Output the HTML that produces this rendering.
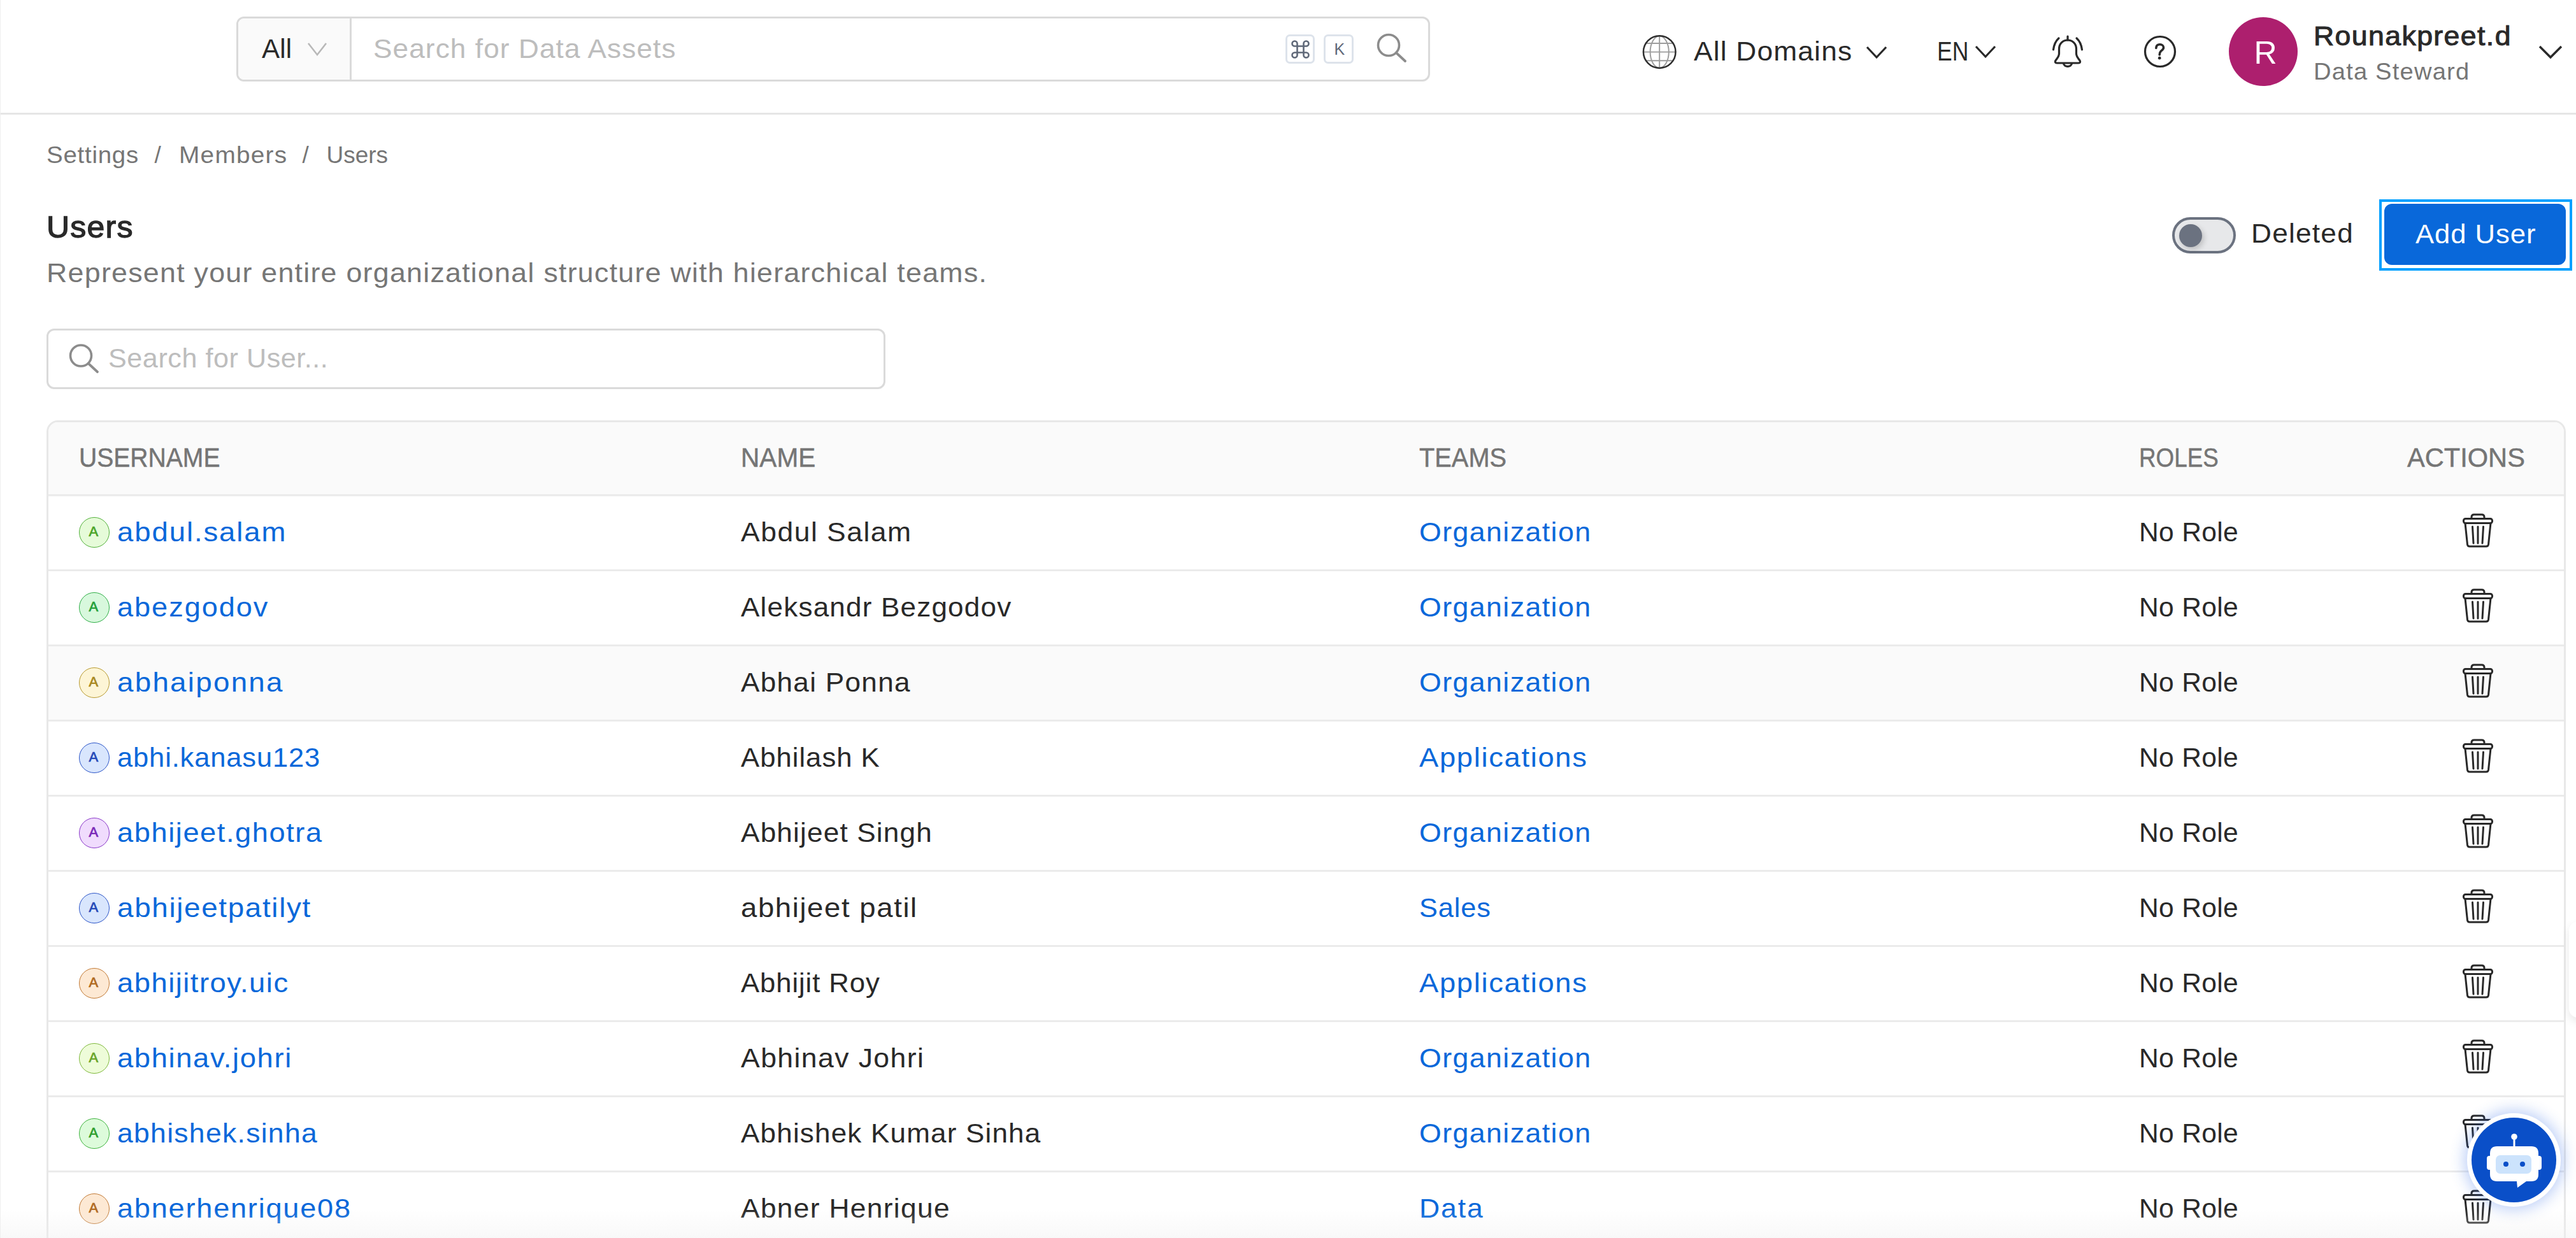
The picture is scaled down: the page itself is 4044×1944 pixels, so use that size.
<!DOCTYPE html>
<html><head><meta charset="utf-8"><style>
html,body{margin:0;padding:0;width:4044px;height:1944px;overflow:hidden;background:#fff;}
body{position:relative;font-family:"Liberation Sans",sans-serif;}
.t{position:absolute;white-space:nowrap;line-height:1;}
</style></head><body>
<div style="position:absolute;left:0;top:177px;width:4044px;height:3px;background:#e6e6e6"></div>
<div style="position:absolute;left:0;top:0;width:1px;height:1944px;background:#efefef"></div>
<div style="position:absolute;left:371px;top:26px;width:1874px;height:102px;box-sizing:border-box;border:3px solid #dadada;border-radius:12px;background:#fff;overflow:hidden"><div style="position:absolute;left:0;top:0;width:175px;height:100%;background:#fafafa;border-right:3px solid #dadada"></div></div>
<div class="t" style="left:410.5px;top:55.9px;font-size:42px;color:#292929;letter-spacing:0.10px;transform:scaleX(1.0043);transform-origin:0px 0;">All</div>
<svg style="position:absolute;left:480px;top:62px" width="36" height="30" viewBox="0 0 36 30"><path d="M4 6 L18 24 L32 6" fill="none" stroke="#b8b8b8" stroke-width="2.6"/></svg>
<div class="t" style="left:585.5px;top:55.9px;font-size:42px;color:#bdbdbd;letter-spacing:1.02px;transform:scaleX(1.0523);transform-origin:0px 0;">Search for Data Assets</div>
<div style="position:absolute;left:2018px;top:54px;width:46px;height:46px;box-sizing:border-box;border:3px solid #dde3eb;border-radius:7px"></div>
<svg style="position:absolute;left:2026px;top:62px" width="31" height="31" viewBox="0 0 31 31"><path d="M10.5 10.5 H20.5 V20.5 H10.5 Z M10.5 10.5 V6.5 A4 4 0 1 0 6.5 10.5 Z M20.5 10.5 H24.5 A4 4 0 1 0 20.5 6.5 Z M20.5 20.5 V24.5 A4 4 0 1 0 24.5 20.5 Z M10.5 20.5 H6.5 A4 4 0 1 0 10.5 24.5 Z" fill="none" stroke="#5f6878" stroke-width="2.6" stroke-linejoin="round"/></svg>
<div style="position:absolute;left:2078px;top:54px;width:47px;height:46px;box-sizing:border-box;border:3px solid #dde3eb;border-radius:7px"></div>
<div class="t" style="left:2094.5px;top:64.8px;font-size:25px;color:#5f6878;letter-spacing:0.00px;">K</div>
<svg style="position:absolute;left:2155px;top:47px" width="60" height="58" viewBox="0 0 60 58"><circle cx="25" cy="24" r="16.5" fill="none" stroke="#8c8c8c" stroke-width="3.6"/><path d="M37 36 L51 49" stroke="#8c8c8c" stroke-width="3.8" stroke-linecap="round"/></svg>
<svg style="position:absolute;left:2575px;top:51px" width="60" height="60" viewBox="0 0 60 60"><g fill="none"><ellipse cx="30.2" cy="30.6" rx="14.6" ry="25" stroke="#9c9c9c" stroke-width="1.9"/><path d="M30.2 5.5 V55.7 M5.5 30.6 H55 M9 17 H51.4 M9 44.2 H51.4" stroke="#9c9c9c" stroke-width="1.9"/><circle cx="30.2" cy="30.6" r="25.3" stroke="#2e2e2e" stroke-width="2.5"/></g></svg>
<div class="t" style="left:2658.5px;top:59.9px;font-size:42px;color:#292929;letter-spacing:1.14px;transform:scaleX(1.0536);transform-origin:0px 0;">All Domains</div>
<svg style="position:absolute;left:2926px;top:68px" width="40" height="28" viewBox="0 0 40 28"><path d="M5 6 L20 22 L35 6" fill="none" stroke="#292929" stroke-width="3.2"/></svg>
<div class="t" style="left:3040.5px;top:59.9px;font-size:42px;color:#292929;letter-spacing:0.00px;transform:scaleX(0.8448);transform-origin:0px 0;">EN</div>
<svg style="position:absolute;left:3097px;top:68px" width="40" height="28" viewBox="0 0 40 28"><path d="M5 5 L20 21 L35 5" fill="none" stroke="#292929" stroke-width="3.2"/></svg>
<svg style="position:absolute;left:3216px;top:52px" width="60" height="60" viewBox="0 0 60 60"><g fill="none" stroke="#292929" stroke-width="3.2" stroke-linecap="round" stroke-linejoin="round"><path d="M30 5 V11"/><path d="M30 11 C23 11 16.5 16 16.5 25 V32 C16.5 37 13 40 11 43 C9.5 45 10.5 47 13 47 H47 C49.5 47 50.5 45 49 43 C47 40 43.5 37 43.5 32 V25 C43.5 16 37 11 30 11 Z"/><path d="M23.5 47.5 C24.5 54 35.5 54 36.5 47.5"/><path d="M7.5 26 C8.5 18 11.5 12 16 8"/><path d="M52.5 26 C51.5 18 48.5 12 44 8"/></g></svg>
<svg style="position:absolute;left:3362px;top:52px" width="58" height="58" viewBox="0 0 58 58"><circle cx="29" cy="29" r="23.5" fill="none" stroke="#292929" stroke-width="3.2"/><path d="M22.8 23.5 C22.8 19.5 25.3 17.8 28.8 17.8 C32.2 17.8 34.5 20 34.5 22.8 C34.5 25.8 31.7 27 30.2 28.5 C28.9 29.8 28.2 31 28.2 34" fill="none" stroke="#292929" stroke-width="3.6" stroke-linecap="round"/><circle cx="28.2" cy="39.2" r="2.4" fill="#292929"/></svg>
<div style="position:absolute;left:3499px;top:27px;width:108px;height:108px;border-radius:50%;background:#ad1f6e"></div>
<div class="t" style="left:3538.5px;top:58.1px;font-size:50px;color:#fff;letter-spacing:0.00px;">R</div>
<div class="t" style="left:3631.5px;top:36.2px;font-size:42px;color:#292929;letter-spacing:1.33px;transform:scaleX(1.0616);transform-origin:0px 0;-webkit-text-stroke:1.0px #292929;">Rounakpreet.d</div>
<div class="t" style="left:3631.5px;top:95.0px;font-size:36px;color:#767676;letter-spacing:1.12px;transform:scaleX(1.0596);transform-origin:0px 0;">Data Steward</div>
<svg style="position:absolute;left:3982px;top:66px" width="44" height="30" viewBox="0 0 44 30"><path d="M5 7 L22 24 L39 7" fill="none" stroke="#292929" stroke-width="3.4"/></svg>
<div class="t" style="left:73.0px;top:225.2px;font-size:37px;color:#767676;letter-spacing:0.72px;transform:scaleX(1.0392);transform-origin:0px 0;">Settings</div>
<div class="t" style="left:242.5px;top:225.2px;font-size:37px;color:#767676;letter-spacing:0.00px;">/</div>
<div class="t" style="left:280.5px;top:225.2px;font-size:37px;color:#767676;letter-spacing:1.19px;transform:scaleX(1.0487);transform-origin:0px 0;">Members</div>
<div class="t" style="left:474.5px;top:225.2px;font-size:37px;color:#767676;letter-spacing:0.00px;">/</div>
<div class="t" style="left:512.5px;top:225.2px;font-size:37px;color:#767676;letter-spacing:0.00px;">Users</div>
<div class="t" style="left:73.0px;top:332.8px;font-size:48px;color:#292929;letter-spacing:1.20px;transform:scaleX(1.0400);transform-origin:0px 0;-webkit-text-stroke:0.7px #292929;-webkit-text-stroke:1.3px #292929;">Users</div>
<div class="t" style="left:73.0px;top:408.3px;font-size:42px;color:#767676;letter-spacing:1.16px;transform:scaleX(1.0666);transform-origin:0px 0;">Represent your entire organizational structure with hierarchical teams.</div>
<div style="position:absolute;left:3410px;top:341px;width:100px;height:57px;box-sizing:border-box;border:4px solid #6b7280;border-radius:29px;background:#e7e8ea"></div>
<div style="position:absolute;left:3421px;top:352px;width:36px;height:36px;border-radius:50%;background:#6b7280;box-shadow:3px 4px 8px rgba(0,0,0,0.18)"></div>
<div class="t" style="left:3533.5px;top:346.2px;font-size:42px;color:#292929;letter-spacing:1.19px;transform:scaleX(1.0517);transform-origin:0px 0;">Deleted</div>
<div style="position:absolute;left:3735px;top:313px;width:303px;height:112px;box-sizing:border-box;border:4px solid #00a0ff"></div>
<div style="position:absolute;left:3743px;top:320px;width:285px;height:96px;border-radius:12px;background:#0968da"></div>
<div class="t" style="left:3791.5px;top:346.7px;font-size:42px;color:#fff;letter-spacing:0.93px;transform:scaleX(1.0386);transform-origin:0px 0;">Add User</div>
<div style="position:absolute;left:73px;top:516px;width:1317px;height:95px;box-sizing:border-box;border:3px solid #dadada;border-radius:12px"></div>
<svg style="position:absolute;left:104px;top:536px" width="56" height="56" viewBox="0 0 56 56"><circle cx="23" cy="22.5" r="16.5" fill="none" stroke="#8c8c8c" stroke-width="3.6"/><path d="M35 35 L49 48" stroke="#8c8c8c" stroke-width="3.8" stroke-linecap="round"/></svg>
<div class="t" style="left:169.5px;top:541.9px;font-size:42px;color:#bdbdbd;letter-spacing:0.52px;transform:scaleX(1.0275);transform-origin:0px 0;">Search for User...</div>
<div style="position:absolute;left:73px;top:660px;width:3955px;height:1400px;box-sizing:border-box;border:3px solid #e8e8e8;border-radius:18px;background:#fff;overflow:hidden"><div style="position:absolute;left:0;top:0;right:0;height:117px;background:#fafafa"></div></div>
<div class="t" style="left:124.1px;top:697.9px;font-size:42px;color:#757575;letter-spacing:0.00px;transform:scaleX(0.9303);transform-origin:0px 0;-webkit-text-stroke:0.5px #757575;">USERNAME</div>
<div class="t" style="left:1162.5px;top:697.9px;font-size:42px;color:#757575;letter-spacing:0.00px;transform:scaleX(0.9669);transform-origin:0px 0;-webkit-text-stroke:0.5px #757575;">NAME</div>
<div class="t" style="left:2228.1px;top:697.9px;font-size:42px;color:#757575;letter-spacing:0.00px;transform:scaleX(0.9476);transform-origin:0px 0;-webkit-text-stroke:0.5px #757575;">TEAMS</div>
<div class="t" style="left:3358.1px;top:697.9px;font-size:42px;color:#757575;letter-spacing:0.00px;transform:scaleX(0.8761);transform-origin:0px 0;-webkit-text-stroke:0.5px #757575;">ROLES</div>
<div class="t" style="left:3778.9px;top:697.9px;font-size:42px;color:#757575;letter-spacing:0.00px;transform:scaleX(0.9904);transform-origin:0px 0;-webkit-text-stroke:0.5px #757575;">ACTIONS</div>
<div style="position:absolute;left:76px;top:776px;width:3949px;height:3px;background:#ebebeb"></div>
<div style="position:absolute;left:76px;top:894px;width:3949px;height:3px;background:#ebebeb"></div>
<div style="position:absolute;left:76px;top:1012px;width:3949px;height:3px;background:#ebebeb"></div>
<div style="position:absolute;left:76px;top:1130px;width:3949px;height:3px;background:#ebebeb"></div>
<div style="position:absolute;left:76px;top:1248px;width:3949px;height:3px;background:#ebebeb"></div>
<div style="position:absolute;left:76px;top:1366px;width:3949px;height:3px;background:#ebebeb"></div>
<div style="position:absolute;left:76px;top:1484px;width:3949px;height:3px;background:#ebebeb"></div>
<div style="position:absolute;left:76px;top:1602px;width:3949px;height:3px;background:#ebebeb"></div>
<div style="position:absolute;left:76px;top:1720px;width:3949px;height:3px;background:#ebebeb"></div>
<div style="position:absolute;left:76px;top:1838px;width:3949px;height:3px;background:#ebebeb"></div>
<div style="position:absolute;left:76px;top:1015px;width:3949px;height:115px;background:#fafafa"></div>
<div style="position:absolute;left:124px;top:812px;width:48px;height:48px;box-sizing:border-box;border:1.8px solid #52b13a;border-radius:50%;background:#e6fbd9"></div>
<div class="t" style="left:139.5px;top:824.0px;font-size:22px;color:#4ba52a;letter-spacing:0.00px;-webkit-text-stroke:0.7px #4ba52a;">A</div>
<div class="t" style="left:184.1px;top:814.5px;font-size:42px;color:#0968da;letter-spacing:1.75px;transform:scaleX(1.0841);transform-origin:0px 0;">abdul.salam</div>
<div class="t" style="left:1162.5px;top:814.5px;font-size:42px;color:#292929;letter-spacing:1.37px;transform:scaleX(1.0609);transform-origin:0px 0;">Abdul Salam</div>
<div class="t" style="left:2228.1px;top:814.5px;font-size:42px;color:#0968da;letter-spacing:1.32px;transform:scaleX(1.0651);transform-origin:0px 0;">Organization</div>
<div class="t" style="left:3358.1px;top:814.5px;font-size:42px;color:#292929;letter-spacing:0.33px;transform:scaleX(1.0132);transform-origin:0px 0;">No Role</div>
<svg style="position:absolute;left:3864px;top:806px" width="52" height="56" viewBox="0 0 52 56"><g fill="none" stroke="#292929" stroke-width="3" stroke-linejoin="round" stroke-linecap="round"><path d="M16 8.5 V6 Q16 2 20 2 H32 Q36 2 36 6 V8.5"/><rect x="3.5" y="8.5" width="45" height="7" rx="3"/><path d="M6 15.5 L9.5 49 Q10 52 13 52 L39 52 Q42 52 42.5 49 L46 15.5"/><path d="M17.5 21 L19 47 M26 21 L26 47 M34.5 21 L33 47"/></g></svg>
<div style="position:absolute;left:124px;top:930px;width:48px;height:48px;box-sizing:border-box;border:1.8px solid #2fae47;border-radius:50%;background:#d8f8dd"></div>
<div class="t" style="left:139.5px;top:942.0px;font-size:22px;color:#24a03a;letter-spacing:0.00px;-webkit-text-stroke:0.7px #24a03a;">A</div>
<div class="t" style="left:184.1px;top:932.5px;font-size:42px;color:#0968da;letter-spacing:1.80px;transform:scaleX(1.0752);transform-origin:0px 0;">abezgodov</div>
<div class="t" style="left:1162.5px;top:932.5px;font-size:42px;color:#292929;letter-spacing:1.09px;transform:scaleX(1.0506);transform-origin:0px 0;">Aleksandr Bezgodov</div>
<div class="t" style="left:2228.1px;top:932.5px;font-size:42px;color:#0968da;letter-spacing:1.32px;transform:scaleX(1.0651);transform-origin:0px 0;">Organization</div>
<div class="t" style="left:3358.1px;top:932.5px;font-size:42px;color:#292929;letter-spacing:0.33px;transform:scaleX(1.0132);transform-origin:0px 0;">No Role</div>
<svg style="position:absolute;left:3864px;top:924px" width="52" height="56" viewBox="0 0 52 56"><g fill="none" stroke="#292929" stroke-width="3" stroke-linejoin="round" stroke-linecap="round"><path d="M16 8.5 V6 Q16 2 20 2 H32 Q36 2 36 6 V8.5"/><rect x="3.5" y="8.5" width="45" height="7" rx="3"/><path d="M6 15.5 L9.5 49 Q10 52 13 52 L39 52 Q42 52 42.5 49 L46 15.5"/><path d="M17.5 21 L19 47 M26 21 L26 47 M34.5 21 L33 47"/></g></svg>
<div style="position:absolute;left:124px;top:1048px;width:48px;height:48px;box-sizing:border-box;border:1.8px solid #b89a30;border-radius:50%;background:#fdf5d6"></div>
<div class="t" style="left:139.5px;top:1060.0px;font-size:22px;color:#a8881e;letter-spacing:0.00px;-webkit-text-stroke:0.7px #a8881e;">A</div>
<div class="t" style="left:184.1px;top:1050.5px;font-size:42px;color:#0968da;letter-spacing:2.04px;transform:scaleX(1.0909);transform-origin:0px 0;">abhaiponna</div>
<div class="t" style="left:1162.5px;top:1050.5px;font-size:42px;color:#292929;letter-spacing:1.19px;transform:scaleX(1.0519);transform-origin:0px 0;">Abhai Ponna</div>
<div class="t" style="left:2228.1px;top:1050.5px;font-size:42px;color:#0968da;letter-spacing:1.32px;transform:scaleX(1.0651);transform-origin:0px 0;">Organization</div>
<div class="t" style="left:3358.1px;top:1050.5px;font-size:42px;color:#292929;letter-spacing:0.33px;transform:scaleX(1.0132);transform-origin:0px 0;">No Role</div>
<svg style="position:absolute;left:3864px;top:1042px" width="52" height="56" viewBox="0 0 52 56"><g fill="none" stroke="#292929" stroke-width="3" stroke-linejoin="round" stroke-linecap="round"><path d="M16 8.5 V6 Q16 2 20 2 H32 Q36 2 36 6 V8.5"/><rect x="3.5" y="8.5" width="45" height="7" rx="3"/><path d="M6 15.5 L9.5 49 Q10 52 13 52 L39 52 Q42 52 42.5 49 L46 15.5"/><path d="M17.5 21 L19 47 M26 21 L26 47 M34.5 21 L33 47"/></g></svg>
<div style="position:absolute;left:124px;top:1166px;width:48px;height:48px;box-sizing:border-box;border:1.8px solid #2c55c8;border-radius:50%;background:#d9e6fd"></div>
<div class="t" style="left:139.5px;top:1178.0px;font-size:22px;color:#2449b8;letter-spacing:0.00px;-webkit-text-stroke:0.7px #2449b8;">A</div>
<div class="t" style="left:184.1px;top:1168.5px;font-size:42px;color:#0968da;letter-spacing:0.81px;transform:scaleX(1.0365);transform-origin:0px 0;">abhi.kanasu123</div>
<div class="t" style="left:1162.5px;top:1168.5px;font-size:42px;color:#292929;letter-spacing:0.91px;transform:scaleX(1.0423);transform-origin:0px 0;">Abhilash K</div>
<div class="t" style="left:2228.1px;top:1168.5px;font-size:42px;color:#0968da;letter-spacing:1.53px;transform:scaleX(1.0805);transform-origin:0px 0;">Applications</div>
<div class="t" style="left:3358.1px;top:1168.5px;font-size:42px;color:#292929;letter-spacing:0.33px;transform:scaleX(1.0132);transform-origin:0px 0;">No Role</div>
<svg style="position:absolute;left:3864px;top:1160px" width="52" height="56" viewBox="0 0 52 56"><g fill="none" stroke="#292929" stroke-width="3" stroke-linejoin="round" stroke-linecap="round"><path d="M16 8.5 V6 Q16 2 20 2 H32 Q36 2 36 6 V8.5"/><rect x="3.5" y="8.5" width="45" height="7" rx="3"/><path d="M6 15.5 L9.5 49 Q10 52 13 52 L39 52 Q42 52 42.5 49 L46 15.5"/><path d="M17.5 21 L19 47 M26 21 L26 47 M34.5 21 L33 47"/></g></svg>
<div style="position:absolute;left:124px;top:1284px;width:48px;height:48px;box-sizing:border-box;border:1.8px solid #8a38c9;border-radius:50%;background:#f0dcfd"></div>
<div class="t" style="left:139.5px;top:1296.0px;font-size:22px;color:#7a2ab8;letter-spacing:0.00px;-webkit-text-stroke:0.7px #7a2ab8;">A</div>
<div class="t" style="left:184.1px;top:1286.5px;font-size:42px;color:#0968da;letter-spacing:1.44px;transform:scaleX(1.0776);transform-origin:0px 0;">abhijeet.ghotra</div>
<div class="t" style="left:1162.5px;top:1286.5px;font-size:42px;color:#292929;letter-spacing:1.06px;transform:scaleX(1.0535);transform-origin:0px 0;">Abhijeet Singh</div>
<div class="t" style="left:2228.1px;top:1286.5px;font-size:42px;color:#0968da;letter-spacing:1.32px;transform:scaleX(1.0651);transform-origin:0px 0;">Organization</div>
<div class="t" style="left:3358.1px;top:1286.5px;font-size:42px;color:#292929;letter-spacing:0.33px;transform:scaleX(1.0132);transform-origin:0px 0;">No Role</div>
<svg style="position:absolute;left:3864px;top:1278px" width="52" height="56" viewBox="0 0 52 56"><g fill="none" stroke="#292929" stroke-width="3" stroke-linejoin="round" stroke-linecap="round"><path d="M16 8.5 V6 Q16 2 20 2 H32 Q36 2 36 6 V8.5"/><rect x="3.5" y="8.5" width="45" height="7" rx="3"/><path d="M6 15.5 L9.5 49 Q10 52 13 52 L39 52 Q42 52 42.5 49 L46 15.5"/><path d="M17.5 21 L19 47 M26 21 L26 47 M34.5 21 L33 47"/></g></svg>
<div style="position:absolute;left:124px;top:1402px;width:48px;height:48px;box-sizing:border-box;border:1.8px solid #2c55c8;border-radius:50%;background:#d9e6fd"></div>
<div class="t" style="left:139.5px;top:1414.0px;font-size:22px;color:#2449b8;letter-spacing:0.00px;-webkit-text-stroke:0.7px #2449b8;">A</div>
<div class="t" style="left:184.1px;top:1404.5px;font-size:42px;color:#0968da;letter-spacing:1.52px;transform:scaleX(1.0905);transform-origin:0px 0;">abhijeetpatilyt</div>
<div class="t" style="left:1162.5px;top:1404.5px;font-size:42px;color:#292929;letter-spacing:1.43px;transform:scaleX(1.0856);transform-origin:0px 0;">abhijeet patil</div>
<div class="t" style="left:2228.1px;top:1404.5px;font-size:42px;color:#0968da;letter-spacing:0.84px;transform:scaleX(1.0329);transform-origin:0px 0;">Sales</div>
<div class="t" style="left:3358.1px;top:1404.5px;font-size:42px;color:#292929;letter-spacing:0.33px;transform:scaleX(1.0132);transform-origin:0px 0;">No Role</div>
<svg style="position:absolute;left:3864px;top:1396px" width="52" height="56" viewBox="0 0 52 56"><g fill="none" stroke="#292929" stroke-width="3" stroke-linejoin="round" stroke-linecap="round"><path d="M16 8.5 V6 Q16 2 20 2 H32 Q36 2 36 6 V8.5"/><rect x="3.5" y="8.5" width="45" height="7" rx="3"/><path d="M6 15.5 L9.5 49 Q10 52 13 52 L39 52 Q42 52 42.5 49 L46 15.5"/><path d="M17.5 21 L19 47 M26 21 L26 47 M34.5 21 L33 47"/></g></svg>
<div style="position:absolute;left:124px;top:1520px;width:48px;height:48px;box-sizing:border-box;border:1.8px solid #c27a35;border-radius:50%;background:#fde9d4"></div>
<div class="t" style="left:139.5px;top:1532.0px;font-size:22px;color:#b06a22;letter-spacing:0.00px;-webkit-text-stroke:0.7px #b06a22;">A</div>
<div class="t" style="left:184.1px;top:1522.5px;font-size:42px;color:#0968da;letter-spacing:1.34px;transform:scaleX(1.0822);transform-origin:0px 0;">abhijitroy.uic</div>
<div class="t" style="left:1162.5px;top:1522.5px;font-size:42px;color:#292929;letter-spacing:0.82px;transform:scaleX(1.0423);transform-origin:0px 0;">Abhijit Roy</div>
<div class="t" style="left:2228.1px;top:1522.5px;font-size:42px;color:#0968da;letter-spacing:1.53px;transform:scaleX(1.0805);transform-origin:0px 0;">Applications</div>
<div class="t" style="left:3358.1px;top:1522.5px;font-size:42px;color:#292929;letter-spacing:0.33px;transform:scaleX(1.0132);transform-origin:0px 0;">No Role</div>
<svg style="position:absolute;left:3864px;top:1514px" width="52" height="56" viewBox="0 0 52 56"><g fill="none" stroke="#292929" stroke-width="3" stroke-linejoin="round" stroke-linecap="round"><path d="M16 8.5 V6 Q16 2 20 2 H32 Q36 2 36 6 V8.5"/><rect x="3.5" y="8.5" width="45" height="7" rx="3"/><path d="M6 15.5 L9.5 49 Q10 52 13 52 L39 52 Q42 52 42.5 49 L46 15.5"/><path d="M17.5 21 L19 47 M26 21 L26 47 M34.5 21 L33 47"/></g></svg>
<div style="position:absolute;left:124px;top:1638px;width:48px;height:48px;box-sizing:border-box;border:1.8px solid #7eb83a;border-radius:50%;background:#eefcd9"></div>
<div class="t" style="left:139.5px;top:1650.0px;font-size:22px;color:#6aa52a;letter-spacing:0.00px;-webkit-text-stroke:0.7px #6aa52a;">A</div>
<div class="t" style="left:184.1px;top:1640.5px;font-size:42px;color:#0968da;letter-spacing:1.47px;transform:scaleX(1.0813);transform-origin:0px 0;">abhinav.johri</div>
<div class="t" style="left:1162.5px;top:1640.5px;font-size:42px;color:#292929;letter-spacing:1.27px;transform:scaleX(1.0638);transform-origin:0px 0;">Abhinav Johri</div>
<div class="t" style="left:2228.1px;top:1640.5px;font-size:42px;color:#0968da;letter-spacing:1.32px;transform:scaleX(1.0651);transform-origin:0px 0;">Organization</div>
<div class="t" style="left:3358.1px;top:1640.5px;font-size:42px;color:#292929;letter-spacing:0.33px;transform:scaleX(1.0132);transform-origin:0px 0;">No Role</div>
<svg style="position:absolute;left:3864px;top:1632px" width="52" height="56" viewBox="0 0 52 56"><g fill="none" stroke="#292929" stroke-width="3" stroke-linejoin="round" stroke-linecap="round"><path d="M16 8.5 V6 Q16 2 20 2 H32 Q36 2 36 6 V8.5"/><rect x="3.5" y="8.5" width="45" height="7" rx="3"/><path d="M6 15.5 L9.5 49 Q10 52 13 52 L39 52 Q42 52 42.5 49 L46 15.5"/><path d="M17.5 21 L19 47 M26 21 L26 47 M34.5 21 L33 47"/></g></svg>
<div style="position:absolute;left:124px;top:1756px;width:48px;height:48px;box-sizing:border-box;border:1.8px solid #3eb33e;border-radius:50%;background:#ddfbdb"></div>
<div class="t" style="left:139.5px;top:1768.0px;font-size:22px;color:#2f9f2f;letter-spacing:0.00px;-webkit-text-stroke:0.7px #2f9f2f;">A</div>
<div class="t" style="left:184.1px;top:1758.5px;font-size:42px;color:#0968da;letter-spacing:1.22px;transform:scaleX(1.0596);transform-origin:0px 0;">abhishek.sinha</div>
<div class="t" style="left:1162.5px;top:1758.5px;font-size:42px;color:#292929;letter-spacing:1.08px;transform:scaleX(1.0502);transform-origin:0px 0;">Abhishek Kumar Sinha</div>
<div class="t" style="left:2228.1px;top:1758.5px;font-size:42px;color:#0968da;letter-spacing:1.32px;transform:scaleX(1.0651);transform-origin:0px 0;">Organization</div>
<div class="t" style="left:3358.1px;top:1758.5px;font-size:42px;color:#292929;letter-spacing:0.33px;transform:scaleX(1.0132);transform-origin:0px 0;">No Role</div>
<svg style="position:absolute;left:3864px;top:1750px" width="52" height="56" viewBox="0 0 52 56"><g fill="none" stroke="#292929" stroke-width="3" stroke-linejoin="round" stroke-linecap="round"><path d="M16 8.5 V6 Q16 2 20 2 H32 Q36 2 36 6 V8.5"/><rect x="3.5" y="8.5" width="45" height="7" rx="3"/><path d="M6 15.5 L9.5 49 Q10 52 13 52 L39 52 Q42 52 42.5 49 L46 15.5"/><path d="M17.5 21 L19 47 M26 21 L26 47 M34.5 21 L33 47"/></g></svg>
<div style="position:absolute;left:124px;top:1874px;width:48px;height:48px;box-sizing:border-box;border:1.8px solid #c27a35;border-radius:50%;background:#fde9d4"></div>
<div class="t" style="left:139.5px;top:1886.0px;font-size:22px;color:#b06a22;letter-spacing:0.00px;-webkit-text-stroke:0.7px #b06a22;">A</div>
<div class="t" style="left:184.1px;top:1876.5px;font-size:42px;color:#0968da;letter-spacing:1.61px;transform:scaleX(1.0761);transform-origin:0px 0;">abnerhenrique08</div>
<div class="t" style="left:1162.5px;top:1876.5px;font-size:42px;color:#292929;letter-spacing:1.22px;transform:scaleX(1.0568);transform-origin:0px 0;">Abner Henrique</div>
<div class="t" style="left:2228.1px;top:1876.5px;font-size:42px;color:#0968da;letter-spacing:1.73px;transform:scaleX(1.0618);transform-origin:0px 0;">Data</div>
<div class="t" style="left:3358.1px;top:1876.5px;font-size:42px;color:#292929;letter-spacing:0.33px;transform:scaleX(1.0132);transform-origin:0px 0;">No Role</div>
<svg style="position:absolute;left:3864px;top:1868px" width="52" height="56" viewBox="0 0 52 56"><g fill="none" stroke="#292929" stroke-width="3" stroke-linejoin="round" stroke-linecap="round"><path d="M16 8.5 V6 Q16 2 20 2 H32 Q36 2 36 6 V8.5"/><rect x="3.5" y="8.5" width="45" height="7" rx="3"/><path d="M6 15.5 L9.5 49 Q10 52 13 52 L39 52 Q42 52 42.5 49 L46 15.5"/><path d="M17.5 21 L19 47 M26 21 L26 47 M34.5 21 L33 47"/></g></svg>
<div style="position:absolute;left:4033px;top:1447px;width:30px;height:151px;border-radius:14px;background:#fff;box-shadow:0 6px 14px rgba(0,0,0,0.09)"></div>
<div style="position:absolute;left:0;top:1900px;width:4044px;height:44px;background:linear-gradient(rgba(240,240,240,0),rgba(240,240,240,0.45))"></div>
<div style="position:absolute;left:3873px;top:1748px;width:147px;height:147px;border-radius:50%;background:#fff;box-shadow:0 0 22px 5px rgba(40,100,230,0.30)"></div>
<div style="position:absolute;left:3880px;top:1755px;width:133px;height:133px;border-radius:50%;background:#0a4fc8"></div>
<svg style="position:absolute;left:3880px;top:1755px" width="133" height="133" viewBox="0 0 133 133"><circle cx="67" cy="30" r="4.8" fill="#fff"/><rect x="65.5" y="30" width="3" height="16" fill="#fff"/><rect x="24" y="60" width="8" height="22" rx="4" fill="#fff"/><rect x="102" y="60" width="8" height="22" rx="4" fill="#fff"/><path d="M40 45 H94 Q105 45 105 56 V89 Q105 100 94 100 H86 L72 110 L71 100 H40 Q29 100 29 89 V56 Q29 45 40 45 Z" fill="#fff"/><rect x="38" y="59" width="56" height="29" rx="7" fill="#cce3fc"/><circle cx="54" cy="73" r="4" fill="#0a4fc8"/><circle cx="80" cy="73" r="4" fill="#0a4fc8"/></svg>
</body></html>
